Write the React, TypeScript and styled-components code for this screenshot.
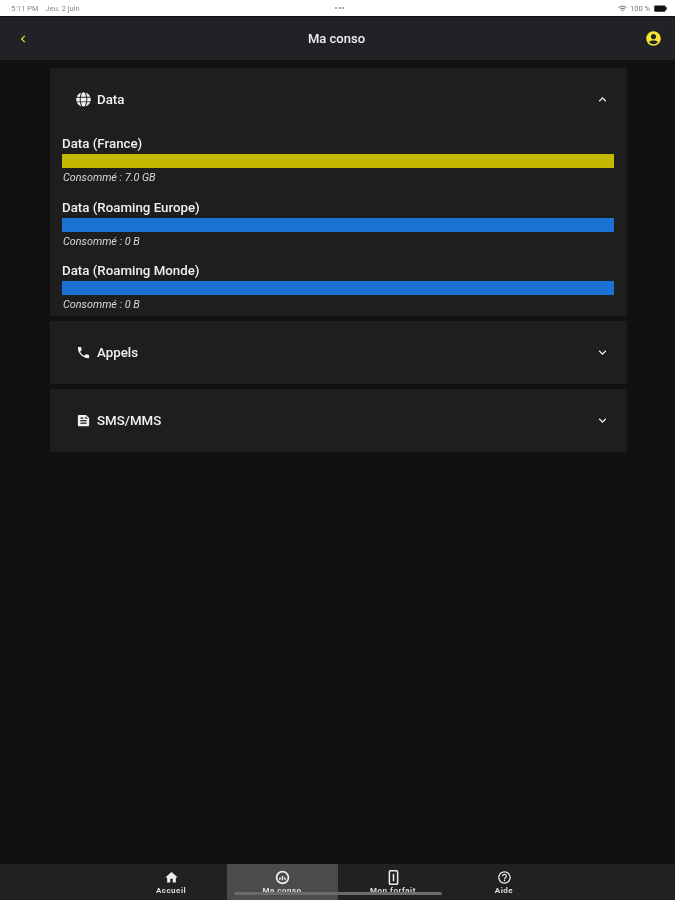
import { createGlobalStyle, styled } from "styled-components"
import {
  MdBatteryFull,
  MdFeed,
  MdHelpOutline,
  MdHome,
  MdKeyboardArrowDown,
  MdKeyboardArrowUp,
  MdPhone,
  MdWifi,
} from "react-icons/md"
import { FaChevronLeft, FaGlobe, FaUserCircle } from "react-icons/fa"
import type { ComponentType } from "react"

const GlobalStyle = createGlobalStyle`
  html, body {
    margin: 0;
    padding: 0;
    background: #111111;
  }
  body {
    font-family: Roboto, "Liberation Sans", sans-serif;
  }
`

const Page = styled.div`
  position: relative;
  display: flex;
  flex-direction: column;
  width: 675px;
  height: 900px;
  overflow: hidden;
  background: #111111;
  filter: blur(0.4px);
`

const StatusBar = styled.div`
  display: grid;
  grid-template-columns: 1fr auto 1fr;
  align-items: center;
  height: 16px;
  padding: 0 7px 0 11px;
  background: #fff;
  color: #8a8a8a;
  font-size: 7.5px;
  border-bottom: 1px solid #111;
`

const StatusLeft = styled.div`
  display: flex;
  gap: 7px;
`

const StatusDots = styled.div`
  display: flex;
  gap: 1.5px;
`

const Dot = styled.span`
  width: 2px;
  height: 2px;
  border-radius: 50%;
  background: #888;
`

const StatusRight = styled.div`
  display: flex;
  justify-content: flex-end;
  align-items: center;
  gap: 3px;
  color: #777;
`

const BatteryIcon = styled(MdBatteryFull)`
  transform: rotate(90deg);
  color: #111;
`

const Header = styled.header`
  display: flex;
  align-items: center;
  justify-content: space-between;
  height: 43px;
  padding: 0 14px 0 19px;
  background: #212225;
  color: #f0f0f0;
`

const HeaderTitle = styled.h1`
  margin: 0;
  font-size: 13px;
  font-weight: 500;
`

const BackIcon = styled(FaChevronLeft)`
  color: #e8d92e;
`

const AccountIcon = styled(FaUserCircle)`
  color: #f5e52f;
`

const Main = styled.main`
  flex: 1;
  display: flex;
  flex-direction: column;
  gap: 5px;
  padding: 8px 48px 0 50px;
`

const Card = styled.section`
  background: #1e1e1f;
`

const CardHead = styled.div`
  display: flex;
  align-items: center;
  gap: 6px;
  height: 63px;
  padding: 0 17px 0 26px;
  color: #f2f2f2;
`

const CardTitle = styled.span`
  flex: 1;
  font-size: 13.3px;
  font-weight: 500;
`

const CardBody = styled.div`
  display: flex;
  flex-direction: column;
  gap: 14.5px;
  padding: 5px 13px 4px 12px;
`

const Usage = styled.div`
  display: flex;
  flex-direction: column;
`

const UsageLabel = styled.div`
  height: 16px;
  margin-bottom: 2px;
  font-size: 13.3px;
  line-height: 16px;
  font-weight: 500;
  color: #f0f0f0;
`

const UsageBar = styled.div<{ $color: string }>`
  height: 14px;
  background: ${(p) => p.$color};
`

const UsageText = styled.div`
  height: 14px;
  margin-top: 3px;
  padding-left: 1px;
  font-size: 10.8px;
  line-height: 14px;
  font-style: italic;
  color: #d8d8d8;
`

const TabBar = styled.nav`
  display: grid;
  grid-template-columns: repeat(4, 111px);
  justify-content: center;
  height: 36px;
  background: #1f2123;
`

const Tab = styled.div<{ $active?: boolean }>`
  display: flex;
  flex-direction: column;
  align-items: center;
  padding-top: 6px;
  background: ${(p) => (p.$active ? "#4a4b4c" : "transparent")};
  color: #eee;
`

const TabIconSlot = styled.div`
  display: flex;
  align-items: center;
  justify-content: center;
  height: 15px;
`

const TabLabel = styled.span`
  margin-top: 1px;
  font-size: 8px;
  line-height: 9px;
  font-weight: 700;
  letter-spacing: 0.5px;
  color: #ddd;
`

const HomeIndicator = styled.div`
  position: absolute;
  left: 234px;
  bottom: 5px;
  width: 208px;
  height: 3px;
  border-radius: 2px;
  background: #6a6b6c;
`

function GaugeIcon({ size }: { size: number }) {
  return (
    <svg viewBox="0 0 16 16" width={size} height={size} aria-hidden>
      <circle cx="8" cy="8" r="6.3" fill="none" stroke="currentColor" strokeWidth="1.8" />
      <path d="M8 11V6.5M4.8 10.5l1-2.5M11.2 10.5l-1-2.5" stroke="currentColor" strokeWidth="1.5" />
    </svg>
  )
}

function PhoneFrameIcon({ size }: { size: number }) {
  return (
    <svg viewBox="0 0 16 16" width={size} height={size} aria-hidden>
      <rect x="3.6" y="0.8" width="8.8" height="14.4" rx="1.2" fill="none" stroke="currentColor" strokeWidth="1.6" />
      <rect x="7.2" y="4" width="1.6" height="8" fill="currentColor" />
    </svg>
  )
}

const usages = [
  { label: "Data (France)", used: "Consommé : 7.0 GB", color: "#c4b800" },
  { label: "Data (Roaming Europe)", used: "Consommé : 0 B", color: "#1a72d4" },
  { label: "Data (Roaming Monde)", used: "Consommé : 0 B", color: "#1a72d4" },
]

const tabs: { label: string; icon: ComponentType<{ size: number }>; active?: boolean }[] = [
  { label: "Accueil", icon: MdHome },
  { label: "Ma conso", icon: GaugeIcon, active: true },
  { label: "Mon forfait", icon: PhoneFrameIcon },
  { label: "Aide", icon: MdHelpOutline },
]

export default function App() {
  return (
    <>
      <GlobalStyle />
      <Page>
        <StatusBar>
          <StatusLeft>
            <span>5:11 PM</span>
            <span>Jeu. 2 juin</span>
          </StatusLeft>
          <StatusDots>
            <Dot />
            <Dot />
            <Dot />
          </StatusDots>
          <StatusRight>
            <MdWifi size={9} />
            <span>100 %</span>
            <BatteryIcon size={15} />
          </StatusRight>
        </StatusBar>

        <Header>
          <BackIcon size={8} />
          <HeaderTitle>Ma conso</HeaderTitle>
          <AccountIcon size={15} />
        </Header>

        <Main>
          <Card>
            <CardHead>
              <FaGlobe size={15} />
              <CardTitle>Data</CardTitle>
              <MdKeyboardArrowUp size={15} />
            </CardHead>
            <CardBody>
              {usages.map((u) => (
                <Usage key={u.label}>
                  <UsageLabel>{u.label}</UsageLabel>
                  <UsageBar $color={u.color} />
                  <UsageText>{u.used}</UsageText>
                </Usage>
              ))}
            </CardBody>
          </Card>
          <Card>
            <CardHead>
              <MdPhone size={15} />
              <CardTitle>Appels</CardTitle>
              <MdKeyboardArrowDown size={15} />
            </CardHead>
          </Card>
          <Card>
            <CardHead>
              <MdFeed size={15} />
              <CardTitle>SMS/MMS</CardTitle>
              <MdKeyboardArrowDown size={15} />
            </CardHead>
          </Card>
        </Main>

        <TabBar>
          {tabs.map((t) => (
            <Tab key={t.label} $active={t.active}>
              <TabIconSlot>
                <t.icon size={15} />
              </TabIconSlot>
              <TabLabel>{t.label}</TabLabel>
            </Tab>
          ))}
        </TabBar>
        <HomeIndicator />
      </Page>
    </>
  )
}
